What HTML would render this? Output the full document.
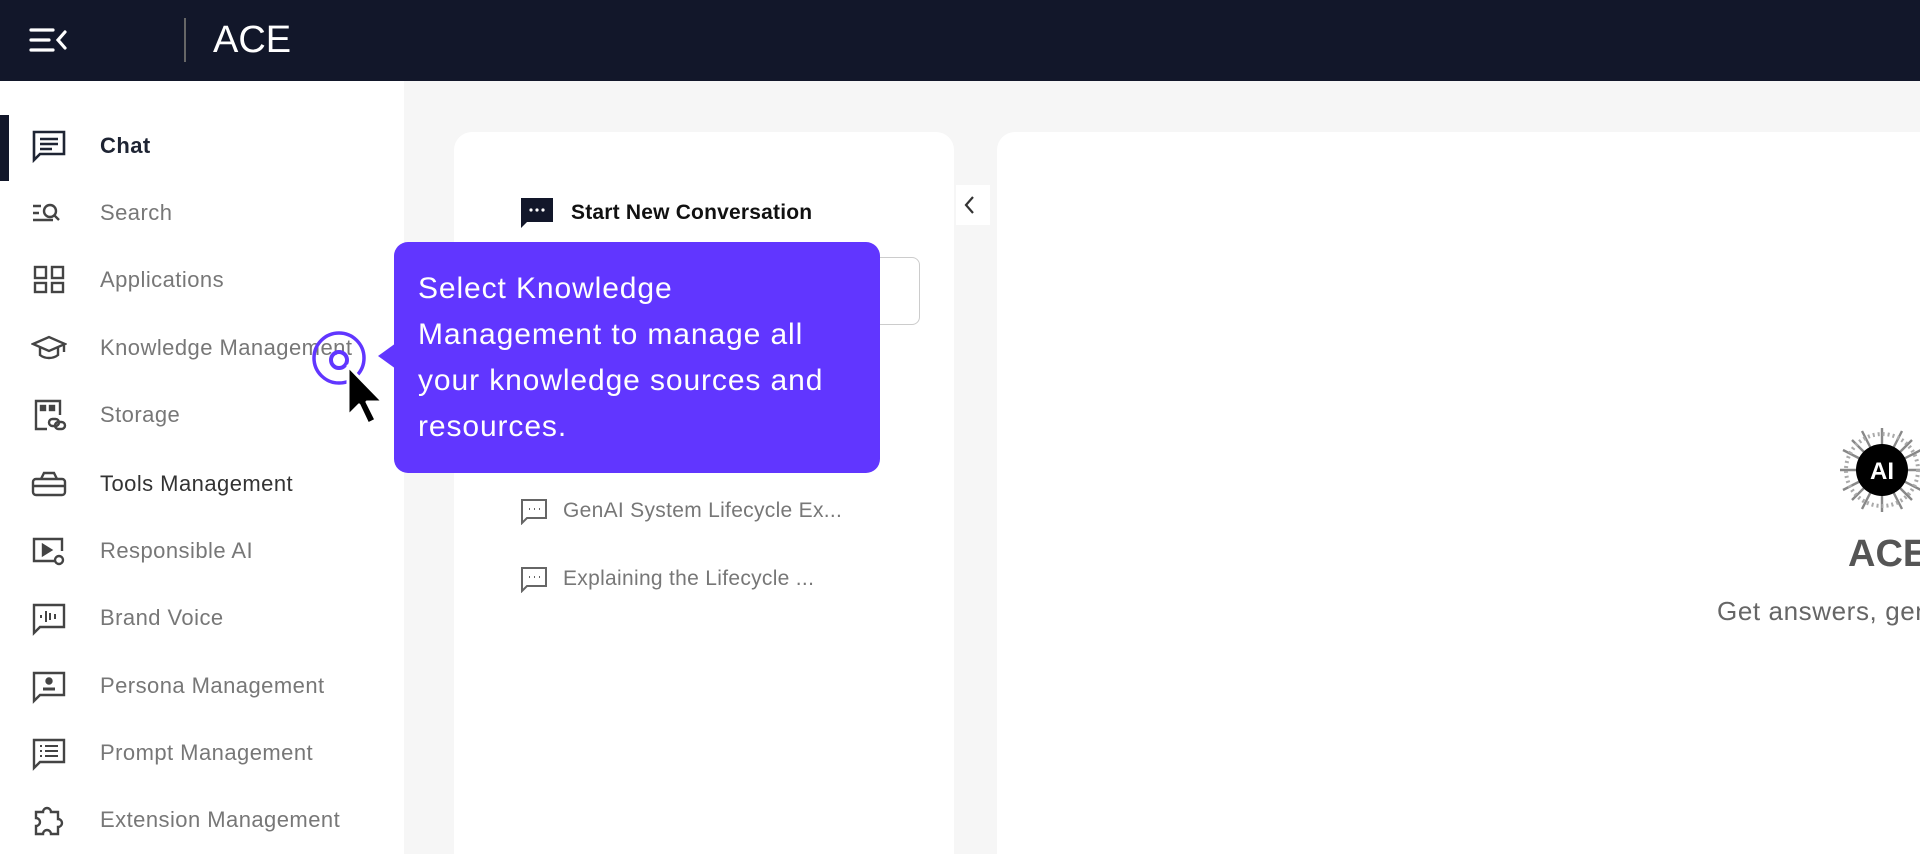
<!DOCTYPE html>
<html><head><meta charset="utf-8"><style>
*{box-sizing:border-box;margin:0;padding:0}
html,body{width:1920px;height:854px;overflow:hidden}
body{background:#f6f6f6;font-family:"Liberation Sans",Arial,sans-serif;position:relative}
.hdr{position:absolute;left:0;top:0;width:1920px;height:81px;background:#12172a}
.side{position:absolute;left:0;top:81px;width:404px;height:773px;background:#fff}
.item{position:absolute;left:0;width:404px;height:40px;display:flex;align-items:center}
.item svg{position:absolute;left:31px;width:36px;height:36px}
.item span{position:absolute;left:100px;font-size:22px;letter-spacing:0.45px;color:#777}
.card{position:absolute;background:#fff;border-radius:18px}
.chat{position:absolute;left:520px;font-size:21px;letter-spacing:0.3px;color:#777;display:flex;align-items:center;white-space:nowrap}
.chat svg{width:28px;height:28px;margin-right:15px}
</style></head><body>
<div class="hdr">
 <svg style="position:absolute;left:29px;top:26px" width="38" height="28" viewBox="0 0 38 28"><g stroke="#fff" stroke-width="3.2" stroke-linecap="round" fill="none"><path d="M2 4H24M2 14H20M2 24H24M36 6L29 14L36 22"/></g></svg>
 <div style="position:absolute;left:184px;top:18px;width:2px;height:44px;background:#666"></div>
 <div style="position:absolute;left:213px;top:19px;font-size:38px;color:#fff">ACE</div>
</div>
<div class="side">
 <div style="position:absolute;left:0;top:34px;width:9px;height:66px;background:#12172a"></div>
</div>
<div class="item" style="top:126px"><svg viewBox="0 0 36 36" fill="none" stroke="#1e2433" stroke-width="2.6"><path d="M3 4h30v22H9l-6 6z"/><path d="M9 11h18M9 16h18M9 21h12"/></svg><span style="color:#1e2433;font-weight:bold">Chat</span></div>
<div class="item" style="top:193px"><svg viewBox="0 0 36 36" fill="none" stroke="#444" stroke-width="2.4"><path d="M2 11h8M2 18h6M2 25h20"/><circle cx="19" cy="16" r="6"/><path d="M23 20l5 5"/></svg><span>Search</span></div>
<div class="item" style="top:260px"><svg viewBox="0 0 36 36" fill="none" stroke="#444" stroke-width="2.4"><rect x="4" y="5" width="11" height="11"/><rect x="21" y="5" width="11" height="11"/><rect x="4" y="21" width="11" height="9"/><rect x="21" y="21" width="11" height="9"/></svg><span>Applications</span></div>
<div class="item" style="top:328px"><svg viewBox="0 0 36 36" fill="none" stroke="#444" stroke-width="2.4"><path d="M2 14L18 7l16 7-16 7z"/><path d="M9 17v8c5 4 13 4 18 0v-8M33 14v8"/></svg><span>Knowledge Management</span></div>
<div class="item" style="top:395px"><svg viewBox="0 0 36 36" fill="none" stroke="#444" stroke-width="2.4"><path d="M16 32H5V4h24v14"/><rect x="10" y="9" width="4" height="4" fill="#444"/><rect x="19" y="9" width="4" height="4" fill="#444"/><rect x="18" y="22" width="10" height="7" rx="3.5"/><rect x="24" y="25" width="10" height="7" rx="3.5"/></svg><span>Storage</span></div>
<div class="item" style="top:464px"><svg viewBox="0 0 36 36" fill="none" stroke="#444" stroke-width="2.4"><path d="M10 13l3-6h10l3 6"/><rect x="2" y="13" width="32" height="16" rx="3"/><path d="M2 20h32"/></svg><span style="color:#333">Tools Management</span></div>
<div class="item" style="top:531px"><svg viewBox="0 0 36 36" fill="none" stroke="#444" stroke-width="2.4"><path d="M24 28H3V6h28v12"/><path d="M12 12v10l8-5z" fill="#444"/><circle cx="28" cy="27" r="4"/></svg><span>Responsible AI</span></div>
<div class="item" style="top:598px"><svg viewBox="0 0 36 36" fill="none" stroke="#444" stroke-width="2.4"><path d="M3 5h30v22H9l-6 6z"/><path d="M10 15v3M15 11v11M19 13v7M24 14v5" stroke-width="2"/></svg><span>Brand Voice</span></div>
<div class="item" style="top:666px"><svg viewBox="0 0 36 36" fill="none" stroke="#444" stroke-width="2.4"><path d="M3 5h30v22H9l-6 6z"/><circle cx="18" cy="13" r="2.5" fill="#444"/><path d="M12 21h12" stroke-width="3"/></svg><span>Persona Management</span></div>
<div class="item" style="top:733px"><svg viewBox="0 0 36 36" fill="none" stroke="#444" stroke-width="2.4"><path d="M3 5h30v22H9l-6 6z"/><path d="M9 11h2M14 11h13M9 16h2M14 16h13M9 21h2M14 21h13" stroke-width="2"/></svg><span>Prompt Management</span></div>
<div class="item" style="top:800px"><svg viewBox="0 0 36 36" fill="none" stroke="#444" stroke-width="2.4"><path d="M5 10h7a4 4 0 1 1 8 0h7v7a4 4 0 1 1 0 8v7H20a4 4 0 1 0-8 0H5v-8a4 4 0 1 0 0-8z"/></svg><span>Extension Management</span></div>

<div class="card" style="left:454px;top:132px;width:500px;height:760px"></div>
<svg style="position:absolute;left:520px;top:197px" width="34" height="32" viewBox="0 0 34 32"><path d="M1 1h32v24H7l-6 6z" fill="#12172a"/><circle cx="11" cy="13" r="1.6" fill="#fff"/><circle cx="17" cy="13" r="1.6" fill="#fff"/><circle cx="23" cy="13" r="1.6" fill="#fff"/></svg>
<div style="position:absolute;left:571px;top:201px;font-size:21px;font-weight:bold;color:#111;letter-spacing:0.2px">Start New Conversation</div>
<div style="position:absolute;left:520px;top:257px;width:400px;height:68px;border:1px solid #ccc;border-radius:8px"></div>
<div style="position:absolute;left:956px;top:185px;width:34px;height:40px;background:#fff"></div>
<svg style="position:absolute;left:960px;top:194px" width="20" height="22"><path d="M13 3L6 11l7 8" stroke="#333" stroke-width="2.2" fill="none"/></svg>
<div class="chat" style="top:428px"><svg viewBox="0 0 28 28" fill="none" stroke="#666" stroke-width="2"><path d="M2 3h24v18H7l-5 5z"/><path d="M9 12h1M14 12h1M19 12h1"/></svg>Reasoned Word Comprehensi...</div>
<div class="chat" style="top:497px"><svg viewBox="0 0 28 28" fill="none" stroke="#666" stroke-width="2"><path d="M2 3h24v18H7l-5 5z"/><path d="M9 12h1M14 12h1M19 12h1"/></svg>GenAI System Lifecycle Ex...</div>
<div class="chat" style="top:565px"><svg viewBox="0 0 28 28" fill="none" stroke="#666" stroke-width="2"><path d="M2 3h24v18H7l-5 5z"/><path d="M9 12h1M14 12h1M19 12h1"/></svg>Explaining the Lifecycle ...</div>

<div class="card" style="left:997px;top:132px;width:960px;height:760px"></div>
<svg style="position:absolute;left:1838px;top:426px" width="88" height="88" viewBox="0 0 88 88"><g stroke="#888" stroke-width="2.4"><path d="M44 2v84M2 44h84M14 14l60 60M74 14L14 74M24 5l40 78M64 5L24 83M5 24l78 40M5 64l78-40"/></g><circle cx="44" cy="44" r="36" fill="none" stroke="#aaa" stroke-width="4" stroke-dasharray="2 3"/><circle cx="44" cy="44" r="26" fill="#000"/><text x="44" y="53" font-size="24" font-weight="bold" fill="#fff" text-anchor="middle" font-family="Liberation Sans">AI</text></svg>
<div style="position:absolute;left:1848px;top:533px;font-size:38px;font-weight:bold;color:#555">ACE</div>
<div style="position:absolute;left:1717px;top:596px;font-size:26px;letter-spacing:0.6px;color:#666;white-space:nowrap">Get answers, generate</div>

<div style="position:absolute;left:394px;top:242px;width:486px;height:231px;background:#6136ff;border-radius:14px"></div>
<div style="position:absolute;left:378px;top:343px;width:0;height:0;border-top:13px solid transparent;border-bottom:13px solid transparent;border-right:18px solid #6136ff"></div>
<div style="position:absolute;left:418px;top:266px;width:470px;font-size:30px;letter-spacing:0.9px;line-height:46px;color:#fff;white-space:nowrap">Select Knowledge<br>Management to manage all<br>your knowledge sources and<br>resources.</div>

<svg style="position:absolute;left:310px;top:330px" width="90" height="120" viewBox="0 0 90 120"><circle cx="29" cy="28" r="25" fill="none" stroke="#6136ff" stroke-width="3.5"/><circle cx="29" cy="30" r="8" fill="none" stroke="#6136ff" stroke-width="4"/><path d="M38 36v50l11-11 9 19 8-4-9-18h16z" fill="#000" stroke="#fff" stroke-width="3" stroke-linejoin="round"/></svg>
</body></html>
